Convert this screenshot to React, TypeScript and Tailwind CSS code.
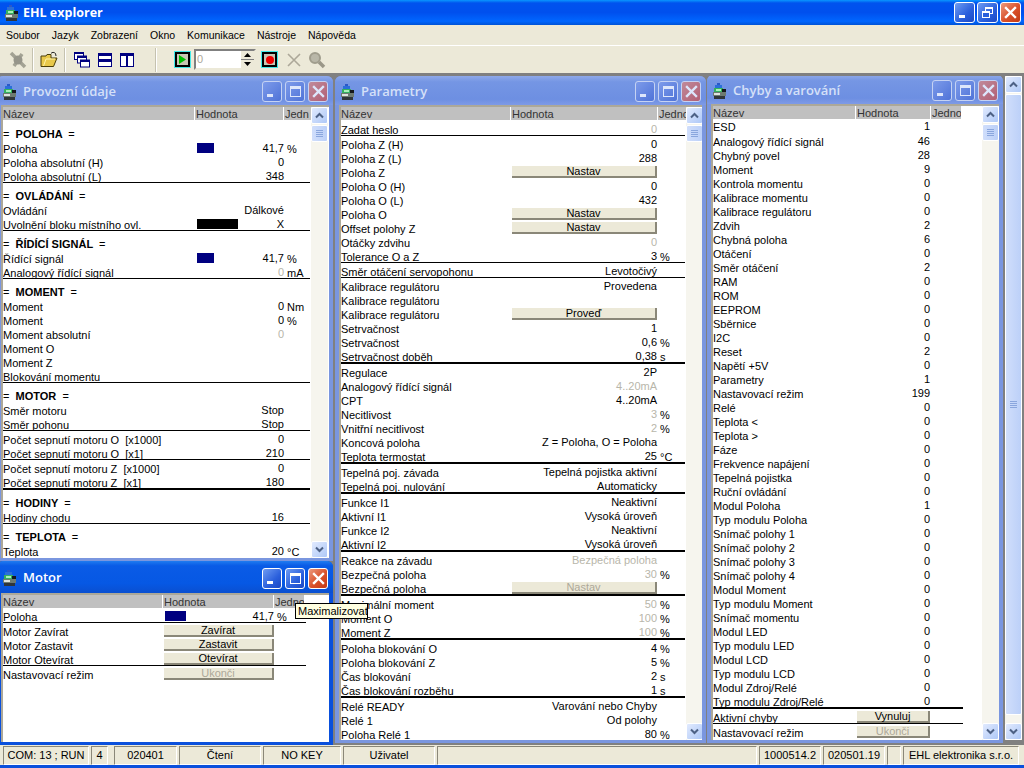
import type { ReactNode } from "react";

// ---------------------------------------------------------------------------
// Row data
// ---------------------------------------------------------------------------

interface Item {
  kind?: "head" | "line" | "thick";
  l?: string;
  v?: string;
  u?: string;
  dim?: boolean;
  bar?: "s" | "m" | "k";
  btn?: string;
  off?: boolean;
  tall?: boolean;
  gap?: boolean;
}

const line: Item = { kind: "line" };
const thick: Item = { kind: "thick" };
const head = (l: string): Item => ({ kind: "head", l });

const provozni: Item[] = [
  head("POLOHA"),
  { l: "Poloha", bar: "s", v: "41,7", u: "%" },
  { l: "Poloha absolutní (H)", v: "0" },
  { l: "Poloha absolutní (L)", v: "348" },
  line,
  head("OVLÁDÁNÍ"),
  { l: "Ovládání", v: "Dálkové" },
  { l: "Uvolnění bloku místního ovl.", bar: "k", v: "X" },
  line,
  head("ŘÍDÍCÍ SIGNÁL"),
  { l: "Řídící signál", bar: "s", v: "41,7", u: "%" },
  { l: "Analogový řídící signál", v: "0", dim: true, u: "mA" },
  line,
  head("MOMENT"),
  { l: "Moment", v: "0", u: "Nm" },
  { l: "Moment", v: "0", u: "%" },
  { l: "Moment absolutní", v: "0", dim: true },
  { l: "Moment O" },
  { l: "Moment Z" },
  { l: "Blokování momentu" },
  line,
  head("MOTOR"),
  { l: "Směr motoru", v: "Stop" },
  { l: "Směr pohonu", v: "Stop" },
  line,
  { l: "Počet sepnutí motoru O  [x1000]", v: "0", gap: true },
  { l: "Počet sepnutí motoru O  [x1]", v: "210" },
  line,
  { l: "Počet sepnutí motoru Z  [x1000]", v: "0", gap: true },
  { l: "Počet sepnutí motoru Z  [x1]", v: "180" },
  thick,
  head("HODINY"),
  { l: "Hodiny chodu", v: "16" },
  line,
  head("TEPLOTA"),
  { l: "Teplota", v: "20", u: "°C" },
];

const parametry: Item[] = [
  { l: "Zadat heslo", v: "0", dim: true },
  line,
  { l: "Poloha Z (H)", v: "0", gap: true },
  { l: "Poloha Z (L)", v: "288" },
  { l: "Poloha Z", btn: "Nastav" },
  { l: "Poloha O (H)", v: "0" },
  { l: "Poloha O (L)", v: "432" },
  { l: "Poloha O", btn: "Nastav" },
  { l: "Offset polohy Z", btn: "Nastav" },
  { l: "Otáčky zdvihu", v: "0", dim: true },
  { l: "Tolerance O a Z", v: "3", u: "%" },
  line,
  { l: "Směr otáčení servopohonu", v: "Levotočivý", gap: true },
  line,
  { l: "Kalibrace regulátoru", v: "Provedena", gap: true },
  { l: "Kalibrace regulátoru" },
  { l: "Kalibrace regulátoru", btn: "Proveď" },
  { l: "Setrvačnost", v: "1" },
  { l: "Setrvačnost", v: "0,6", u: "%" },
  { l: "Setrvačnost doběh", v: "0,38", u: "s" },
  thick,
  { l: "Regulace", v: "2P", gap: true },
  { l: "Analogový řídící signál", v: "4..20mA", dim: true },
  { l: "CPT", v: "4..20mA" },
  { l: "Necitlivost", v: "3", dim: true, u: "%" },
  { l: "Vnitřní necitlivost", v: "2", dim: true, u: "%" },
  { l: "Koncová poloha", v: "Z = Poloha, O = Poloha" },
  { l: "Teplota termostat", v: "25", u: "°C" },
  thick,
  { l: "Tepelná poj. závada", v: "Tepelná pojistka aktivní", gap: true },
  { l: "Tepelná poj. nulování", v: "Automaticky" },
  thick,
  { l: "Funkce I1", v: "Neaktivní", gap: true },
  { l: "Aktivní I1", v: "Vysoká úroveň" },
  { l: "Funkce I2", v: "Neaktivní" },
  { l: "Aktivní I2", v: "Vysoká úroveň" },
  thick,
  { l: "Reakce na závadu", v: "Bezpečná poloha", dim: true, gap: true },
  { l: "Bezpečná poloha", v: "30", dim: true, u: "%" },
  { l: "Bezpečná poloha", btn: "Nastav", off: true },
  thick,
  { l: "Maximální moment", v: "50", dim: true, u: "%", gap: true },
  { l: "Moment O", v: "100", dim: true, u: "%" },
  { l: "Moment Z", v: "100", dim: true, u: "%" },
  thick,
  { l: "Poloha blokování O", v: "4", u: "%", gap: true },
  { l: "Poloha blokování Z", v: "5", u: "%" },
  { l: "Čas blokování", v: "2", u: "s" },
  { l: "Čas blokování rozběhu", v: "1", u: "s" },
  thick,
  { l: "Relé READY", v: "Varování nebo Chyby", gap: true },
  { l: "Relé 1", v: "Od polohy" },
  { l: "Poloha Relé 1", v: "80", u: "%" },
];

const chybyNames: [string, string][] = [
  ["Analogový řídící signál", "46"], ["Chybný povel", "28"], ["Moment", "9"], ["Kontrola momentu", "0"],
  ["Kalibrace momentu", "0"], ["Kalibrace regulátoru", "0"], ["Zdvih", "2"], ["Chybná poloha", "6"],
  ["Otáčení", "0"], ["Směr otáčení", "2"], ["RAM", "0"], ["ROM", "0"], ["EEPROM", "0"], ["Sběrnice", "0"],
  ["I2C", "0"], ["Reset", "2"], ["Napětí +5V", "0"], ["Parametry", "1"], ["Nastavovací režim", "199"],
  ["Relé", "0"], ["Teplota <", "0"], ["Teplota >", "0"], ["Fáze", "0"], ["Frekvence napájení", "0"],
  ["Tepelná pojistka", "0"], ["Ruční ovládání", "0"], ["Modul Poloha", "1"], ["Typ modulu Poloha", "0"],
  ["Snímač polohy 1", "0"], ["Snímač polohy 2", "0"], ["Snímač polohy 3", "0"], ["Snímač polohy 4", "0"],
  ["Modul Moment", "0"], ["Typ modulu Moment", "0"], ["Snímač momentu", "0"], ["Modul LED", "0"],
  ["Typ modulu LED", "0"], ["Modul LCD", "0"], ["Typ modulu LCD", "0"], ["Modul Zdroj/Relé", "0"],
  ["Typ modulu Zdroj/Relé", "0"],
];

const chyby: Item[] = [
  { l: "ESD", v: "1", tall: true },
  ...chybyNames.map(([l, v]): Item => ({ l, v })),
  thick,
  { l: "Aktivní chyby", btn: "Vynuluj", gap: true },
  line,
  { l: "Nastavovací režim", btn: "Ukonči", off: true, gap: true },
];

const motor: Item[] = [
  { l: "Poloha", bar: "m", v: "41,7", u: "%" },
  line,
  { l: "Motor Zavírat", btn: "Zavírat", gap: true },
  { l: "Motor Zastavit", btn: "Zastavit" },
  { l: "Motor Otevírat", btn: "Otevírat" },
  line,
  { l: "Nastavovací režim", btn: "Ukonči", off: true, gap: true },
];

// ---------------------------------------------------------------------------
// Small pieces
// ---------------------------------------------------------------------------

function AppIcon() {
  return (
    <svg width="13" height="16" viewBox="0 0 13 16" className="shrink-0">
      <rect x="4" y="0" width="3" height="3" fill="#2a58c8" />
      <rect x="2" y="2" width="7" height="3" fill="#2a6fd8" />
      <rect x="1" y="5" width="9" height="4" fill="#35b060" />
      <rect x="3" y="6" width="5" height="2" fill="#a8f0b8" />
      <rect x="9" y="6" width="4" height="3" fill="#15181c" />
      <rect x="0" y="9" width="13" height="4" fill="#6d7a72" />
      <rect x="1" y="10" width="6" height="2" fill="#dfe4df" />
      <rect x="1" y="13" width="11" height="3" fill="#30363a" />
    </svg>
  );
}

function CapButton({ type, big, active }: { type: "min" | "max" | "restore" | "close"; big?: boolean; active?: boolean }) {
  const size = big ? "w-[21px] h-[21px]" : "w-[20px] h-[21px]";
  const skin =
    type === "close"
      ? active
        ? "bg-[linear-gradient(135deg,#eb9a7e,#d9502a_55%,#c23a16)]"
        : "bg-[linear-gradient(135deg,#c08a9a,#b25f74)]"
      : active
        ? "bg-[linear-gradient(135deg,#6f9cf2,#2a5fdc_60%,#1c48c4)]"
        : "bg-[linear-gradient(135deg,#7d9bea,#4f73d8)]";
  const edge = active ? "border-white" : "border-[#c5d2f3]";
  const ink = active ? "white" : "#dde6fb";
  return (
    <div className={`${size} ${skin} ${edge} border rounded-[3px] flex items-center justify-center shrink-0`}>
      <svg width="15" height="15" viewBox="0 0 15 15">
        {type === "min" && <rect x="2" y="10" width="6" height="3" fill={ink} />}
        {type === "max" && (
          <>
            <rect x="2.5" y="3.5" width="10" height="9" fill="none" stroke={ink} />
            <rect x="2" y="2" width="11" height="3" fill={ink} />
          </>
        )}
        {type === "restore" && (
          <>
            <rect x="5.5" y="2.5" width="7" height="6" fill="none" stroke={ink} />
            <rect x="5" y="2" width="8" height="2" fill={ink} />
            <rect x="2.5" y="6.5" width="7" height="6" fill="#2a5fdc" stroke={ink} />
            <rect x="2" y="6" width="8" height="2" fill={ink} />
          </>
        )}
        {type === "close" && <path d="M3 3 L12 12 M12 3 L3 12" stroke={ink} strokeWidth="2.4" strokeLinecap="square" />}
      </svg>
    </div>
  );
}

function Arrow({ dir }: { dir: "up" | "down" }) {
  return (
    <svg width="9" height="7" viewBox="0 0 9 7">
      <path d={dir === "up" ? "M1 5.5 L4.5 2 L8 5.5" : "M1 1.5 L4.5 5 L8 1.5"} fill="none" stroke="#4d6185" strokeWidth="2" />
    </svg>
  );
}

function ScrollButton({ dir }: { dir: "up" | "down" }) {
  return (
    <div className="w-[17px] h-[17px] shrink-0 rounded-[2px] border border-white bg-[linear-gradient(135deg,#e1eafe,#aec8f7)] flex items-center justify-center">
      <Arrow dir={dir} />
    </div>
  );
}

function Grip() {
  return (
    <div className="flex flex-col gap-px w-[7px]">
      <div className="h-px bg-[#8aa6dd]" />
      <div className="h-px bg-[#8aa6dd]" />
      <div className="h-px bg-[#8aa6dd]" />
      <div className="h-px bg-[#8aa6dd]" />
    </div>
  );
}

function ScrollBar({ thumb }: { thumb: string }) {
  return (
    <div className="w-[17px] shrink-0 flex flex-col bg-[#f6f5ee]">
      <ScrollButton dir="up" />
      <div className="flex-1">
        <div className={`${thumb} rounded-[2px] border border-[#fff] bg-[linear-gradient(90deg,#d0defb,#bcd0f8)] flex items-center justify-center`}>
          <Grip />
        </div>
      </div>
      <ScrollButton dir="down" />
    </div>
  );
}

function RowButton({ text, off }: { text: string; off?: boolean }) {
  return (
    <div
      className={`h-[12px] w-full bg-[#ece9d8] border-r-2 border-b-2 border-[#8a8778] flex items-center justify-center leading-[12px] ${
        off ? "text-[#aca899]" : "text-black"
      }`}
    >
      {text}
    </div>
  );
}

interface Cols {
  name: string;
  val: string;
  unit: string;
  line: string;
}

function Rows({ items, cols }: { items: Item[]; cols: Cols }) {
  return (
    <>
      {items.map((it, i) => {
        if (it.kind === "line") return <div key={i} className={`${cols.line} h-px bg-black -mt-[2px] shrink-0`} />;
        if (it.kind === "thick") return <div key={i} className={`${cols.line} h-[2px] bg-black -mt-[2px] shrink-0`} />;
        if (it.kind === "head") {
          return (
            <div key={i} className="h-[15px] mt-[6px] leading-[14px] whitespace-pre overflow-hidden">
              <span>= </span>
              <span className="font-bold"> {it.l} </span>
              <span> =</span>
            </div>
          );
        }
        return (
          <div key={i} className={`${it.tall ? "h-[15px]" : "h-[14px]"} ${it.gap ? "mt-[2px]" : ""} flex`}>
            <div className={`${cols.name} h-[14px] leading-[15px] overflow-hidden whitespace-pre shrink-0`}>{it.l}</div>
            <div className={`${cols.val} shrink-0 relative h-[13px] leading-[13px]`}>
              {it.bar === "s" && <div className="absolute left-[2px] top-[1px] w-[17px] h-[10px] bg-[#000080]" />}
              {it.bar === "m" && <div className="absolute left-[2px] top-[1px] w-[21px] h-[10px] bg-[#000080]" />}
              {it.bar === "k" && <div className="absolute left-[2px] top-[1px] w-[41px] h-[10px] bg-black" />}
              {it.btn ? (
                <div className="pl-px">
                  <RowButton text={it.btn} off={it.off} />
                </div>
              ) : (
                <div className={`text-right whitespace-pre ${it.dim ? "text-[#b8b6aa]" : "text-black"}`}>{it.v}</div>
              )}
            </div>
            {it.u && <div className={`${cols.unit} pl-[3px] leading-[14px] whitespace-pre`}>{it.u}</div>}
          </div>
        );
      })}
    </>
  );
}

function Window({
  pos,
  title,
  titleH,
  active,
  children,
}: {
  pos: string;
  title: string;
  titleH: string;
  active?: boolean;
  children: ReactNode;
}) {
  return (
    <div
      className={`absolute ${pos} flex flex-col border-x-4 border-b-[3px] rounded-t-[6px] ${
        active ? "border-[#0a50dc]" : "border-[#7a96df]"
      }`}
    >
      <div
        className={`${titleH} shrink-0 -mx-1 pl-[6px] pr-[5px] pt-[2px] rounded-t-[6px] flex items-center gap-[7px] ${
          active
            ? "bg-[linear-gradient(180deg,#1f7bf0,#0a5be6_15%,#0658e4_70%,#0a4fd0)]"
            : "bg-[linear-gradient(180deg,#8fa9ea,#7596e4_20%,#6d8fe2_80%,#7e9ae6)]"
        }`}
      >
        <AppIcon />
        <div className={`flex-1 font-['Open_Sans',sans-serif] font-semibold text-[13px] ${active ? "text-white" : "text-[#d5e0f8]"}`}>
          {title}
        </div>
        <div className="flex gap-[3px]">
          <CapButton type="min" active={active} />
          <CapButton type="max" active={active} />
          <CapButton type="close" active={active} />
        </div>
      </div>
      <div className="flex-1 min-h-0 flex border-l-2 border-t-2 border-[#aca899] bg-white overflow-hidden">{children}</div>
    </div>
  );
}

function Header({ name, val, unit, unitText = "Jedno" }: { name: string; val: string; unit: string; unitText?: string }) {
  return (
    <div className="flex h-[13px] leading-[14px] shrink-0 text-[#333]">
      <div className={`${name} bg-[#c0c0c0] border-r border-white shrink-0 overflow-hidden`}>Název</div>
      <div className={`${val} bg-[#c0c0c0] border-r border-white shrink-0 pl-px overflow-hidden`}>Hodnota</div>
      <div className={`${unit} bg-[#c0c0c0] shrink-0 pl-px overflow-hidden whitespace-nowrap`}>{unitText}</div>
    </div>
  );
}

function ToolSep() {
  return <div className="w-[2px] h-[24px] bg-[#c5c2b0] border-r border-white shrink-0" />;
}

function FramedTool({ children }: { children: ReactNode }) {
  return (
    <div className="w-[15px] h-[15px] bg-[#c9c6b4] border-2 border-black outline outline-[1px] outline-[#40e8e8] flex items-center justify-center shrink-0">
      {children}
    </div>
  );
}

function StatusCell({ w, text }: { w: string; text?: string }) {
  return (
    <div className={`${w} h-[19px] shrink-0 border border-t-[#8a8778] border-l-[#8a8778] border-r-white border-b-white flex items-center justify-center whitespace-nowrap overflow-hidden`}>
      {text}
    </div>
  );
}

// ---------------------------------------------------------------------------
// Page
// ---------------------------------------------------------------------------

const provCols: Cols = { name: "w-[192px]", val: "w-[89px]", unit: "w-[26px]", line: "w-[307px]" };
const parCols: Cols = { name: "w-[170px]", val: "w-[146px]", unit: "w-[26px]", line: "w-[344px]" };
const chyCols: Cols = { name: "w-[143px]", val: "w-[74px]", unit: "w-[26px]", line: "w-[250px]" };
const motCols: Cols = { name: "w-[160px]", val: "w-[111px]", unit: "w-[26px]", line: "w-[303px]" };

export default function App() {
  return (
    <div className="w-[1024px] h-[768px] overflow-hidden flex flex-col bg-[#ece9d8] font-['Liberation_Sans',sans-serif] text-[11px] text-black">
      {/* Title bar */}
      <div className="h-[25px] shrink-0 pl-[5px] pr-[3px] flex items-center gap-[5px] bg-[linear-gradient(180deg,#0997ff,#0053ee_12%,#0050ee_50%,#0066ff_85%,#0053d6)]">
        <AppIcon />
        <div className="flex-1 pt-[2px] font-['Open_Sans',sans-serif] font-bold text-[12.5px] text-white">EHL explorer</div>
        <div className="flex gap-[2px]">
          <CapButton type="min" big active />
          <CapButton type="restore" big active />
          <CapButton type="close" big active />
        </div>
      </div>

      {/* Menu */}
      <div className="h-[21px] shrink-0 flex items-center gap-[12px] pl-[6px] pt-px border-b border-white text-[10.5px]">
        {["Soubor", "Jazyk", "Zobrazení", "Okno", "Komunikace", "Nástroje", "Nápověda"].map((m) => (
          <span key={m}>{m}</span>
        ))}
      </div>

      {/* Toolbar */}
      <div className="h-[27px] shrink-0 flex items-center pl-[8px]">
        <svg width="20" height="20" viewBox="0 0 20 20" className="shrink-0">
          <path d="M3 3 L17 17 M14 4 L6 16" stroke="#a3a294" strokeWidth="3.5" />
          <circle cx="10" cy="10" r="4.5" fill="#96958a" />
        </svg>
        <div className="ml-[4px]"><ToolSep /></div>
        <svg width="18" height="18" viewBox="0 0 18 18" className="ml-[6px] shrink-0">
          <path d="M1 5 H6 L7 3.5 H11 V7 H17 L13.5 15.5 H1 Z" fill="#e8c84a" stroke="#4a3d08" />
          <path d="M3.5 15 L6 8 H15" fill="none" stroke="#fff2a8" />
          <path d="M11 2.5 C12 1 14 1 15.5 2.5 L16 5" fill="none" stroke="#222" />
        </svg>
        <div className="ml-[6px]"><ToolSep /></div>
        <svg width="16" height="16" viewBox="0 0 16 16" className="ml-[8px] shrink-0">
          <g fill="white" stroke="#000080">
            <rect x="0.5" y="0.5" width="9" height="7" />
            <rect x="3.5" y="4" width="9" height="7" />
            <rect x="6.5" y="8" width="9" height="7" />
          </g>
          <rect x="0" y="0" width="10" height="2" fill="#000080" />
          <rect x="3" y="4" width="10" height="2" fill="#000080" />
          <rect x="6" y="8" width="10" height="2" fill="#000080" />
        </svg>
        <svg width="16" height="16" viewBox="0 0 16 16" className="ml-[7px] shrink-0">
          <rect x="1.5" y="1.5" width="13" height="13" fill="white" stroke="#000080" />
          <rect x="1" y="1" width="14" height="3" fill="#000080" />
          <rect x="1" y="7" width="14" height="3" fill="#000080" />
        </svg>
        <svg width="16" height="16" viewBox="0 0 16 16" className="ml-[6px] shrink-0">
          <rect x="1.5" y="1.5" width="13" height="13" fill="white" stroke="#000080" />
          <rect x="1" y="1" width="14" height="3" fill="#000080" />
          <rect x="7" y="1" width="2" height="14" fill="#000080" />
        </svg>
        <div className="ml-[20px]"><ToolSep /></div>
        <div className="ml-[18px]">
          <FramedTool>
            <svg width="7" height="9" viewBox="0 0 7 9"><path d="M0 0 L7 4.5 L0 9 Z" fill="#00c000" /></svg>
          </FramedTool>
        </div>
        <div className="ml-[4px] w-[62px] h-[21px] bg-white border-2 border-t-[#808080] border-l-[#808080] border-r-[#ece9d8] border-b-[#ece9d8] flex items-center shrink-0">
          <span className="flex-1 pl-[1px] text-[#aca899]">0</span>
          <div className="w-[13px] h-full flex flex-col bg-[#ece9d8]">
            <div className="flex-1 flex items-center justify-center border-b border-[#808080]">
              <svg width="7" height="4" viewBox="0 0 7 4"><path d="M3.5 0 L7 4 H0 Z" fill="#000" /></svg>
            </div>
            <div className="flex-1 flex items-center justify-center">
              <svg width="7" height="4" viewBox="0 0 7 4"><path d="M0 0 H7 L3.5 4 Z" fill="#000" /></svg>
            </div>
          </div>
        </div>
        <div className="ml-[6px]">
          <FramedTool>
            <div className="w-[8px] h-[8px] rounded-full bg-[#f00000]" />
          </FramedTool>
        </div>
        <svg width="16" height="16" viewBox="0 0 16 16" className="ml-[9px] shrink-0">
          <path d="M2 2 L14 14 M14 2 L2 14" stroke="#aca899" strokeWidth="1.6" />
        </svg>
        <svg width="18" height="18" viewBox="0 0 18 18" className="ml-[6px] shrink-0">
          <circle cx="7" cy="7" r="5" fill="#b9b7a8" stroke="#a09d8d" strokeWidth="2" />
          <path d="M11 11 L16 16" stroke="#9a9788" strokeWidth="3.5" />
        </svg>
      </div>

      {/* MDI client */}
      <div className="flex-1 min-h-0 relative bg-[#808080] border-t-[3px] border-[#808080] overflow-hidden">
        <Window pos="left-[-3px] top-0 w-[336px] h-[485px]" title="Provozní údaje" titleH="h-[29px]">
          <div className="w-[308px] shrink-0 flex flex-col">
            <Header name="w-[192px]" val="w-[89px]" unit="w-[27px]" unitText="Jedn" />
            <div className="pt-px"><Rows items={provozni} cols={provCols} /></div>
          </div>
          <div className="flex"><ScrollBar thumb="h-[17px] mt-[1px]" /></div>
        </Window>

        <Window pos="left-[335px] top-0 w-[371px] h-[667px]" title="Parametry" titleH="h-[29px]">
          <div className="w-[345px] shrink-0 flex flex-col">
            <Header name="w-[170px]" val="w-[147px]" unit="w-[28px]" />
            <div className="pt-[3px]"><Rows items={parametry} cols={parCols} /></div>
          </div>
          <div className="flex"><ScrollBar thumb="h-[17px] mt-[1px]" /></div>
        </Window>

        <Window pos="left-[707px] top-[-1px] w-[296px] h-[668px]" title="Chyby a varování" titleH="h-[29px]">
          <div className="w-[269px] shrink-0 flex flex-col">
            <Header name="w-[143px]" val="w-[75px]" unit="w-[30px]" />
            <div className="pt-px"><Rows items={chyby} cols={chyCols} /></div>
          </div>
          <div className="flex"><ScrollBar thumb="h-[17px] mt-[1px]" /></div>
        </Window>

        <Window pos="left-[-3px] top-[485px] w-[336px] h-[184px]" title="Motor" titleH="h-[32px]" active>
          <div className="w-[308px] shrink-0 flex flex-col">
            <Header name="w-[160px]" val="w-[111px]" unit="w-[30px]" />
            <div className="pt-[2px]"><Rows items={motor} cols={motCols} /></div>
          </div>
        </Window>

        {/* MDI scrollbar */}
        <div className="absolute left-[1005px] top-0 bottom-[5px] flex">
          <ScrollBar thumb="h-[621px] mt-px" />
        </div>

        {/* Tooltip */}
        <div className="absolute left-[295px] top-[527px] w-[73px] h-[16px] bg-[#ffffe1] border border-black px-[2px] leading-[14px] whitespace-nowrap overflow-hidden">
          Maximalizovat
        </div>
      </div>

      {/* Status bar */}
      <div className="h-[20px] shrink-0 flex items-start gap-[2px] pl-[3px] pt-[1px]">
        <StatusCell w="w-[86px]" text="COM: 13 ; RUN" />
        <StatusCell w="w-[17px]" text="4" />
        <div className="w-[2px]" />
        <StatusCell w="w-[63px]" text="020401" />
        <StatusCell w="w-[82px]" text="Čtení" />
        <StatusCell w="w-[78px]" text="NO KEY" />
        <StatusCell w="w-[92px]" text="Uživatel" />
        <StatusCell w="w-[320px]" />
        <StatusCell w="w-[62px]" text="1000514.2" />
        <StatusCell w="w-[62px]" text="020501.19" />
        <StatusCell w="w-[14px]" />
        <StatusCell w="w-[116px]" text="EHL elektronika s.r.o." />
      </div>
      <div className="h-[3px] shrink-0 bg-[#0a50dc]" />
    </div>
  );
}
